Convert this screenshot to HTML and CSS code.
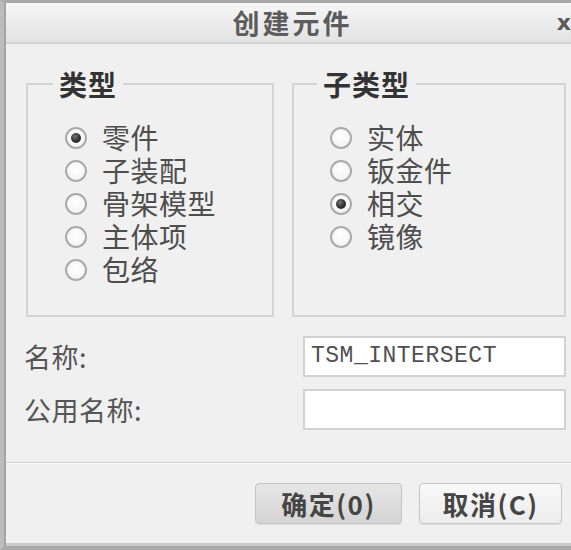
FILE: index.html
```html
<!DOCTYPE html>
<html lang="zh-CN">
<head>
<meta charset="utf-8">
<title>创建元件</title>
<link rel="stylesheet" href="styles.css">
</head>
<body>
<div class="window">
  <div class="titlebar">
    <span></span>
    <span class="title">创建元件</span>
    <span class="close">x</span>
  </div>
  <div class="content">
    <div class="groups">
      <fieldset class="group group-type">
        <legend>类型</legend>
        <ul class="radios">
          <li><span class="radio checked"></span><span class="lbl">零件</span></li>
          <li><span class="radio"></span><span class="lbl">子装配</span></li>
          <li><span class="radio"></span><span class="lbl">骨架模型</span></li>
          <li><span class="radio"></span><span class="lbl">主体项</span></li>
          <li><span class="radio"></span><span class="lbl">包络</span></li>
        </ul>
      </fieldset>
      <fieldset class="group group-sub">
        <legend>子类型</legend>
        <ul class="radios">
          <li><span class="radio"></span><span class="lbl">实体</span></li>
          <li><span class="radio"></span><span class="lbl">钣金件</span></li>
          <li><span class="radio checked"></span><span class="lbl">相交</span></li>
          <li><span class="radio"></span><span class="lbl">镜像</span></li>
        </ul>
      </fieldset>
    </div>
    <div class="form">
      <div class="row">
        <span class="label">名称:</span>
        <div class="field">TSM_INTERSECT</div>
      </div>
      <div class="row">
        <span class="label">公用名称:</span>
        <div class="field"></div>
      </div>
    </div>
  </div>
  <div class="footer">
    <button class="btn btn-default">确定(0)</button>
    <button class="btn">取消(C)</button>
  </div>
</div>
</body>
</html>
```
FILE: styles.css
```css
html, body {
  margin: 0;
  padding: 0;
  background: #f0f0f0;
}
body {
  width: 571px;
  height: 550px;
  overflow: hidden;
  font-family: "Noto Sans CJK SC", "Noto Sans", sans-serif;
}
.window {
  box-sizing: border-box;
  width: 571px;
  height: 550px;
  border-top: 3px solid #a9a9a9;
  border-left: 4px solid #bcbcbc;
  border-bottom: 4px solid #a9a9a9;
  box-shadow: inset 2px 0 0 #a4a4a4, inset 0 -3px 0 #c9c9c9;
  display: flex;
  flex-direction: column;
  background: #f0f0f0;
}
.titlebar {
  height: 39px;
  flex: none;
  border-bottom: 2px solid #d3d3d3;
  background: linear-gradient(#f6f6f6, #e3e3e3);
  display: grid;
  grid-template-columns: 1fr auto 1fr;
  align-items: center;
  margin-left: 2px;
}
.title {
  font-size: 27px;
  font-weight: 700;
  color: #5c5c5c;
  letter-spacing: 3px;
  line-height: 39px;
  padding-left: 8px;
}
.close {
  justify-self: end;
  font-family: "DejaVu Sans", sans-serif;
  font-weight: 700;
  font-size: 22px;
  color: #5a5a5a;
  margin-right: 0;
  line-height: 39px;
}
.content {
  padding: 23px 0 0 20px;
  margin-left: 2px;
  flex: 1;
}
.groups {
  display: flex;
  gap: 18px;
}
.group {
  box-sizing: border-box;
  margin: 0;
  height: 250px;
  border: 2px solid #d4d4d4;
  padding: 0;
}
.group-type { width: 248px; }
.group-sub { width: 274px; }
.group legend {
  font-size: 28px;
  font-weight: 700;
  color: #333;
  line-height: 34px;
  padding: 0 6px;
  margin-left: 25px;
  letter-spacing: 1px;
}
.group-sub legend { margin-left: 23px; }
.radios {
  list-style: none;
  margin: 0;
  padding: 20px 0 0 37px;
}
.group-sub .radios { padding-left: 36px; }
.radios li {
  display: flex;
  align-items: center;
  height: 33px;
  gap: 15px;
}
.lbl {
  font-size: 28px;
  color: #4e4e4e;
  line-height: 33px;
  letter-spacing: 0.5px;
}
.radio {
  box-sizing: border-box;
  width: 22px;
  height: 22px;
  border-radius: 50%;
  border: 2px solid #aaaaaa;
  background: radial-gradient(circle at 50% 40%, #ffffff 0%, #f4f4f4 70%, #e4e4e4 100%);
  display: flex;
  align-items: center;
  justify-content: center;
  flex: none;
}
.radio.checked::after {
  content: "";
  width: 10px;
  height: 10px;
  border-radius: 50%;
  background: radial-gradient(circle at 40% 35%, #777 0%, #333 50%, #1e1e1e 100%);
}
.form {
  padding-top: 19px;
  display: flex;
  flex-direction: column;
  gap: 12px;
}
.row {
  display: flex;
  align-items: center;
  justify-content: space-between;
}
.label {
  font-size: 27px;
  color: #555;
  margin-left: -2px;
  letter-spacing: 0.5px;
}
.field {
  box-sizing: border-box;
  width: 263px;
  height: 41px;
  margin-right: 5px;
  background: #fff;
  border: 2px solid #d2d2d2;
  font-family: "Liberation Mono", "Courier New", monospace;
  font-size: 23px;
  letter-spacing: 0.5px;
  color: #505050;
  line-height: 37px;
  padding-left: 6px;
  white-space: nowrap;
}
.footer {
  flex: none;
  margin-left: 2px;
  border-top: 1px solid #d2d2d2;
  box-shadow: inset 0 1px 0 #fbfbfb;
  height: 84px;
  display: flex;
  justify-content: flex-end;
  align-items: flex-start;
  gap: 17px;
  padding: 20px 9px 0 0;
  box-sizing: border-box;
}
.btn {
  box-sizing: border-box;
  height: 41px;
  border: 1px solid #c6c6c6;
  border-radius: 4px;
  background: linear-gradient(#f9f9f9, #ececec);
  font-family: "Noto Sans CJK SC", sans-serif;
  font-size: 26px;
  font-weight: 700;
  color: #454545;
  letter-spacing: 1.5px;
  padding: 0;
  line-height: 39px;
  box-shadow: 0 1px 1px rgba(0,0,0,0.08);
}
.btn-default {
  width: 147px;
  background: linear-gradient(#e6e6e6, #d4d4d4);
  border-color: #c4c4c4;
}
.btn:not(.btn-default) { width: 143px; }
```
